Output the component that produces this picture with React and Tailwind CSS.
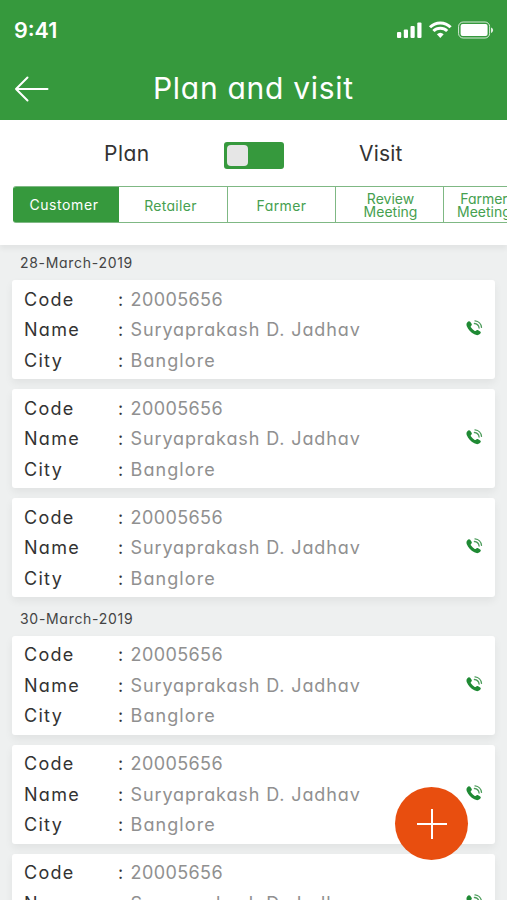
const groups = [
  { date: "28-March-2019", visits: [1, 2, 3] },
  { date: "30-March-2019", visits: [4, 5, 6] },
];

const customer = {
  code: "20005656",
  name: "Suryaprakash D. Jadhav",
  city: "Banglore",
};

function StatusIcons() {
  return (
    <svg width="98" height="18" viewBox="0 0 98 18" fill="#fff">
      <rect x="1" y="11" width="4.2" height="6" rx="1" />
      <rect x="7.8" y="8.5" width="4.2" height="8.5" rx="1" />
      <rect x="14.5" y="5" width="4.2" height="12" rx="1" />
      <rect x="21.3" y="1.5" width="4.2" height="15.5" rx="1" />
      <g fill="none" stroke="#fff" strokeWidth="3">
        <path d="M34 6.3a14.4 14.4 0 0 1 20.6 0" />
        <path d="M37.4 10a9.8 9.8 0 0 1 13.8 0" />
      </g>
      <path d="M44.3 17l-3.4-3.7a5 5 0 0 1 6.8 0z" />
      <rect x="62.6" y="1" width="31" height="16" rx="4.5" fill="none" stroke="#fff" strokeOpacity=".8" />
      <rect x="64.6" y="3" width="27" height="12" rx="2" />
      <path d="M95 6.5c2.8.8 2.8 4.6 0 5.4z" fillOpacity=".85" />
    </svg>
  );
}

function CallIcon() {
  return (
    <svg className="mt-10 h-4 w-[17px] shrink-0" viewBox="0 0 17 16">
      <path
        d="M1.2 2.5C2.2 1.2 3.4.9 4.2 1.8l1.4 2c.5.8.2 1.5-.6 2.2-.5.5-.3 1 .1 1.6.9 1.3 2 2.4 3.3 3.2.6.4 1 .4 1.5-.1.7-.8 1.5-1 2.3-.5l2 1.3c.9.7.8 1.6-.3 2.6-1.6 1.4-3.5 1.3-5.6.2C4.8 12.4 2 9.4.8 6.3.3 4.8.3 3.6 1.2 2.5z"
        fill="#1f8a34"
      />
      <g fill="none" stroke="#4b9b5a" strokeWidth="1.3" strokeLinecap="round">
        <path d="M9 .9c3.5.3 6.2 3 6.5 6.5" />
        <path d="M8.4 3.5c2.5.2 4.4 2.1 4.7 4.5" />
      </g>
    </svg>
  );
}

function Row({ label, value, valueClass }) {
  return (
    <div className="flex h-[30.4px] items-center whitespace-nowrap text-[18px]">
      <span className="w-[94px] tracking-[1.3px] text-[#333]">{label}</span>
      <span className="w-[12.5px] text-[#333]">:</span>
      <span className={`text-[#909090] ${valueClass}`}>{value}</span>
    </div>
  );
}

function VisitCard() {
  return (
    <div className="flex h-[99px] justify-between rounded-[3px] bg-white pr-3 pl-3 shadow-[0_4px_8px_rgba(0,0,0,0.06)]">
      <div className="pt-1">
        <Row label="Code" value={customer.code} valueClass="tracking-[0.4px]" />
        <Row label="Name" value={customer.name} valueClass="tracking-[0.88px]" />
        <Row label="City" value={customer.city} valueClass="tracking-[1.1px]" />
      </div>
      <CallIcon />
    </div>
  );
}

export default function App() {
  return (
    <div className="relative flex h-[900px] w-[507px] flex-col overflow-hidden bg-[#eef0f0] font-['Inter','Liberation_Sans',sans-serif] [font-feature-settings:'cv11']">
      <header className="h-[120px] shrink-0 bg-[#36993d] text-white">
        <div className="flex h-[60px] items-center justify-between pr-[13px] pl-[14px]">
          <span className="text-[21.5px] font-semibold">9:41</span>
          <StatusIcons />
        </div>
        <div className="flex h-[58px] items-center pl-[14px]">
          <svg width="36" height="26" viewBox="0 0 36 26" fill="none" stroke="#fff" strokeWidth="2" strokeLinecap="round" strokeLinejoin="round">
            <path d="M33.5 13H2M13.5 1.5L2 13l11.5 11.5" />
          </svg>
          <h1 className="-mt-[2px] ml-[103px] text-[30px] leading-none tracking-[0.7px] whitespace-nowrap">Plan and visit</h1>
        </div>
      </header>

      <section className="h-[125px] shrink-0 bg-white pt-[17px] shadow-[0_4px_5px_rgba(0,0,0,0.05)]">
        <div className="flex h-8 items-center text-[21px] text-[#333]">
          <span className="mt-[2px] ml-[104px] w-[120px] tracking-[0.5px]">Plan</span>
          <div className="mt-[5px] flex h-[27px] w-[60px] items-center rounded-[3px] bg-[#36993d] pl-[3px]">
            <span className="h-[21px] w-[21px] rounded-[4px] bg-[#e6e6e6]" />
          </div>
          <span className="mt-[2px] ml-[75px] tracking-[0.2px]">Visit</span>
        </div>

        <div className="mt-[17px] ml-[13px] flex h-[37px] overflow-hidden rounded-l-[3px] border-y border-[#7fb884] text-center text-[14px] leading-[13px] text-[#46a04f]">
          <div className="-my-px flex w-[106px] shrink-0 items-center justify-center bg-[#36993d] pr-1 tracking-[0.6px] text-white">Customer</div>
          <div className="flex w-[109px] shrink-0 items-center justify-center border-r border-[#7fb884] pt-px pr-[5px] tracking-[0.3px]">Retailer</div>
          <div className="flex w-[108px] shrink-0 items-center justify-center border-r border-[#7fb884] pt-px tracking-[0.4px]">Farmer</div>
          <div className="flex w-[108px] shrink-0 items-center justify-center border-r border-[#7fb884] pl-[2px]">
            Review
            <br />
            Meeting
          </div>
          <div className="flex w-[108px] shrink-0 items-center pl-[13px]">
            Farmer
            <br />
            Meeting
          </div>
        </div>
      </section>

      <main className="flex flex-col gap-[3px]">
        {groups.map((group) => (
          <section key={group.date} className="px-3">
            <h2 className="flex h-[35.4px] items-center pl-2 text-[14px] tracking-[0.7px] text-[#444]">{group.date}</h2>
            <div className="flex flex-col gap-2.5">
              {group.visits.map((id) => (
                <VisitCard key={id} />
              ))}
            </div>
          </section>
        ))}
      </main>

      <button className="absolute top-[787px] left-[395px] flex h-[73px] w-[73px] items-center justify-center rounded-full bg-[#e84e0f]">
        <svg width="32" height="32" viewBox="0 0 32 32" stroke="#fff" strokeWidth="2">
          <path d="M16 1v30M1 16h30" />
        </svg>
      </button>
    </div>
  );
}
